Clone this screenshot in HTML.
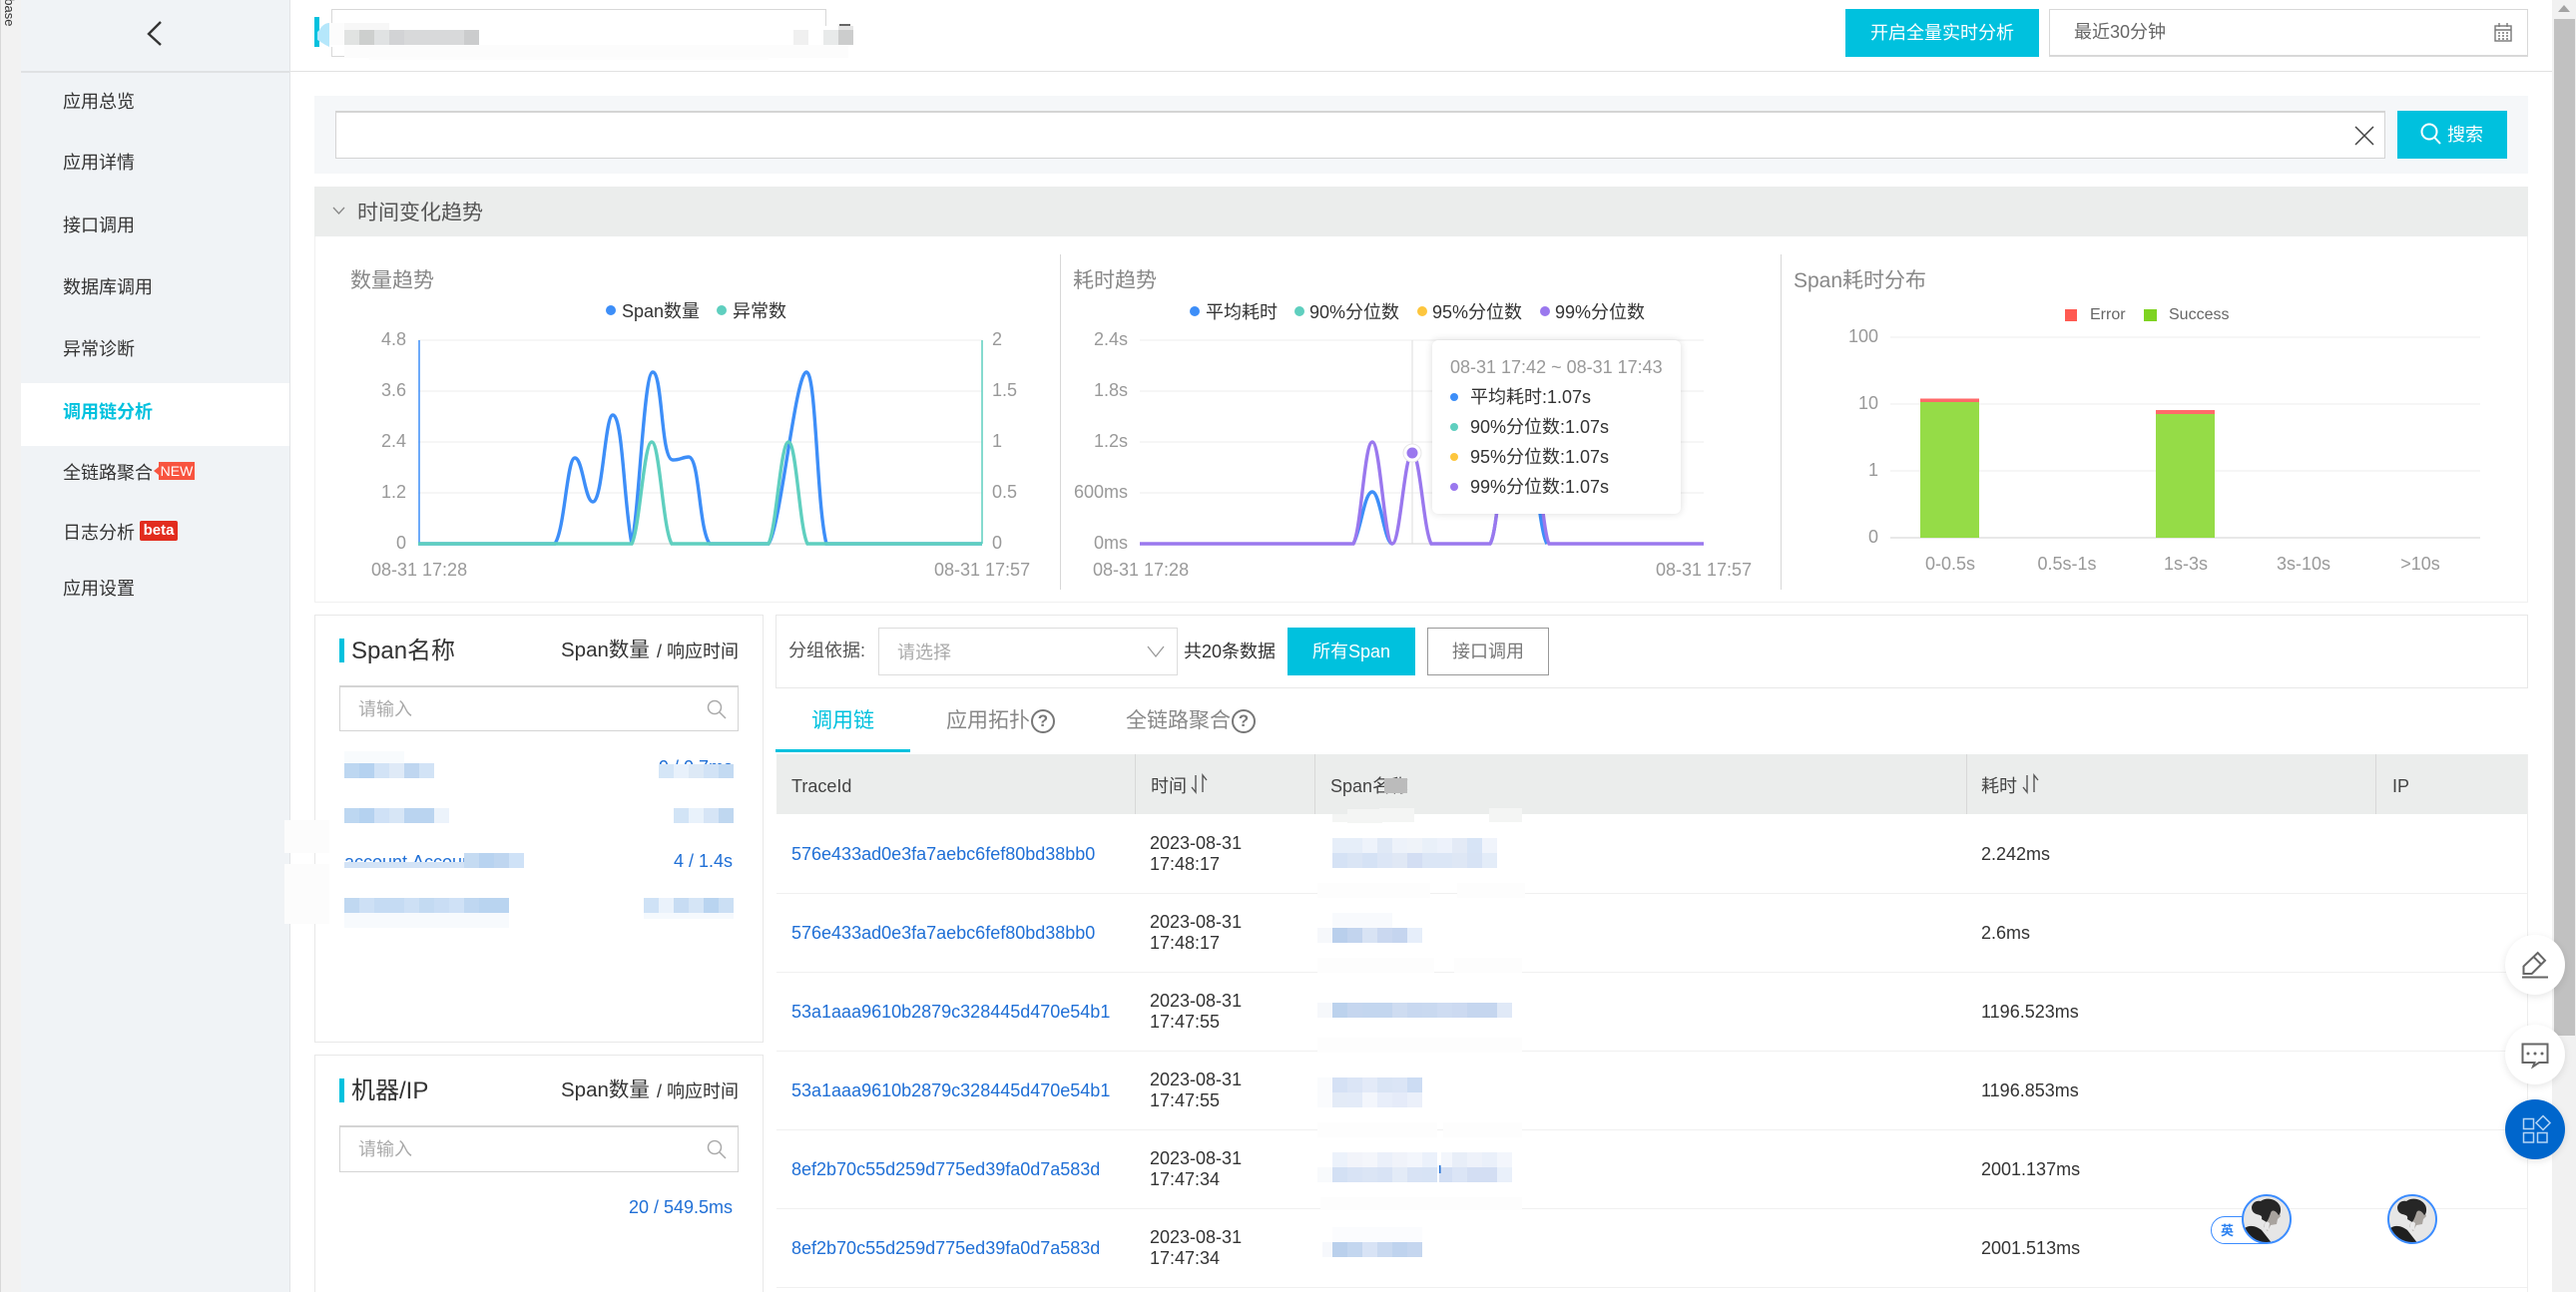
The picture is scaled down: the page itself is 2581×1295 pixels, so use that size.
<!DOCTYPE html>
<html lang="zh-CN"><head><meta charset="utf-8"><title>调用链分析</title>
<style>
html{margin:0;padding:0;background:#fff;width:2581px;height:1295px;overflow:hidden}
body{margin:0;padding:0;background:#fff;position:relative;width:2581px;height:1295px;overflow:hidden;font-family:"Liberation Sans","Noto Sans CJK SC",sans-serif;font-size:18px;color:#333}
.a{position:absolute;box-sizing:border-box}
.t{position:absolute;white-space:nowrap;line-height:24px;height:24px}
.g{color:#999}.d{color:#666}.b{color:#1f6fd6}.c{color:#00c1de}
.f21{font-size:21px}.f16{font-size:16px}
.r{text-align:right}.m{transform:translateX(-50%)}
.dot{position:absolute;width:10px;height:10px;border-radius:50%}
svg.l{position:absolute;left:0;top:0}
.btn{position:absolute;box-sizing:border-box;background:#00c1de;color:#fff;text-align:center;line-height:48px}
.bd{border:1px solid #e8e8e8}
.inp{border:1px solid #d4d4d4;border-top-width:2px;background:#fff}
.q{position:absolute;box-sizing:border-box;width:24px;height:24px;border:2px solid #777;border-radius:50%;color:#777;font-size:17px;font-weight:bold;line-height:20px;text-align:center}
</style></head><body>

<!-- left strip + sidebar -->
<div class="a" style="left:0;top:0;width:21px;height:1295px;background:#f2f2f2;border-left:1px solid #d8d8d8"></div>
<div class="a" style="left:2px;top:-27px;writing-mode:vertical-rl;font-size:13px;line-height:14px;white-space:nowrap;color:#333">database</div>
<div class="a" style="left:21px;top:0;width:270px;height:1295px;background:#f0f3f6;border-right:1px solid #e2e4e6"></div>
<div class="a" style="left:21px;top:71px;width:269px;height:2px;background:#dfe1e3"></div>
<div class="a" style="left:21px;top:384px;width:269px;height:63px;background:#fff"></div>
<span class="t" style="left:63px;top:90px">应用总览</span>
<span class="t" style="left:63px;top:151px">应用详情</span>
<span class="t" style="left:63px;top:214px">接口调用</span>
<span class="t" style="left:63px;top:276px">数据库调用</span>
<span class="t" style="left:63px;top:338px">异常诊断</span>
<span class="t c" style="left:63px;top:401px;font-weight:bold">调用链分析</span>
<span class="t" style="left:63px;top:462px">全链路聚合</span>
<div class="a" style="left:159px;top:463px;width:36px;height:18px;background:#f8543f;color:#fff;font-size:14px;line-height:18px;text-align:center">NEW</div>
<div class="a" style="left:154px;top:468px;width:0;height:0;border:4px solid transparent;border-right:5px solid #f8543f;border-left:0"></div>
<span class="t" style="left:63px;top:522px">日志分析</span>
<div class="a" style="left:140px;top:522px;width:38px;height:20px;background:#e22c1e;color:#fff;font-size:15px;line-height:20px;font-weight:bold;text-align:center;border-radius:2px">beta</div>
<span class="t" style="left:63px;top:578px">应用设置</span>

<!-- header -->
<div class="a" style="left:291px;top:71px;width:2266px;height:1px;background:#e2e2e2"></div>
<div class="a" style="left:332px;top:9px;width:496px;height:48px;border:1px solid #d8d8d8"></div>
<div class="btn" style="left:1849px;top:9px;width:194px;height:48px">开启全量实时分析</div>
<div class="a" style="left:2053px;top:9px;width:480px;height:48px;border:1px solid #d8d8d8;border-bottom-width:2px"></div>
<span class="t d" style="left:2078px;top:20px">最近30分钟</span>

<!-- search panel -->
<div class="a" style="left:315px;top:96px;width:2218px;height:78px;background:#f5f7f9"></div>
<div class="a inp" style="left:336px;top:111px;width:2054px;height:48px"></div>
<div class="btn" style="left:2402px;top:111px;width:110px;height:48px;padding-left:26px">搜索</div>

<!-- section -->
<div class="a bd" style="left:315px;top:236px;width:2218px;height:368px;border-color:#f0f0f0"></div>
<div class="a" style="left:315px;top:187px;width:2218px;height:50px;background:#ebedec"></div>
<span class="t f21" style="left:358px;top:202px;color:#555">时间变化趋势</span>
<div class="a" style="left:1062px;top:255px;width:1px;height:336px;background:#d8d8d8"></div>
<div class="a" style="left:1784px;top:255px;width:1px;height:336px;background:#d8d8d8"></div>

<!-- lower panels -->
<div class="a bd" style="left:315px;top:616px;width:450px;height:429px"></div>
<div class="a bd" style="left:315px;top:1057px;width:450px;height:238px;border-bottom:0"></div>
<div class="a" style="left:340px;top:640px;width:5px;height:24px;background:#00c1de"></div>
<div class="a" style="left:340px;top:1081px;width:5px;height:24px;background:#00c1de"></div>
<span class="t" style="left:352px;top:638px;font-size:24px;line-height:30px;height:30px">Span名称</span>
<span class="t" style="left:352px;top:1079px;font-size:24px;line-height:30px;height:30px">机器/IP</span>
<span class="t" style="left:562px;top:640px;font-size:20.5px">Span数量</span><span class="t" style="left:658px;top:641px">/ 响应时间</span>
<span class="t" style="left:562px;top:1081px;font-size:20.5px">Span数量</span><span class="t" style="left:658px;top:1082px">/ 响应时间</span>
<div class="a inp" style="left:340px;top:687px;width:400px;height:46px"></div>
<div class="a inp" style="left:340px;top:1128px;width:400px;height:47px"></div>
<span class="t" style="left:359px;top:699px;color:#aaa">请输入</span>
<span class="t" style="left:359px;top:1140px;color:#aaa">请输入</span>
<span class="t b" style="left:345px;top:852px">account.Accoun</span>
<span class="t b" style="left:660px;top:757px;width:74px;text-align:right">9 / 0.7ms</span>
<span class="t b" style="left:635px;top:851px;width:99px;text-align:right">4 / 1.4s</span>
<span class="t b" style="left:600px;top:1198px;width:134px;text-align:right">20 / 549.5ms</span>

<!-- right table -->
<div class="a bd" style="left:777px;top:616px;width:1756px;height:74px"></div>
<span class="t" style="left:790px;top:640px;color:#555">分组依据:</span>
<div class="a" style="left:880px;top:629px;width:300px;height:48px;border:1px solid #ddd"></div>
<span class="t" style="left:899px;top:642px;color:#aaa">请选择</span>
<span class="t" style="left:1186px;top:641px">共20条数据</span>
<div class="btn" style="left:1290px;top:629px;width:128px;height:48px">所有Span</div>
<div class="a" style="left:1430px;top:629px;width:122px;height:48px;border:1px solid #999;color:#777;line-height:46px;text-align:center">接口调用</div>
<span class="t f21 c" style="left:813px;top:711px">调用链</span>
<span class="t f21" style="left:948px;top:711px;color:#888">应用拓扑</span>
<span class="t f21" style="left:1128px;top:711px;color:#888">全链路聚合</span>
<div class="q" style="left:1033px;top:711px">?</div>
<div class="q" style="left:1234px;top:711px">?</div>
<div class="a" style="left:777px;top:751px;width:135px;height:3px;background:#00c1de"></div>
<div class="a" style="left:778px;top:756px;width:1755px;height:60px;background:#ebedec"></div>
<div class="a" style="left:1137px;top:756px;width:1px;height:60px;background:#d8d8d8"></div>
<div class="a" style="left:1317px;top:756px;width:1px;height:60px;background:#d8d8d8"></div>
<div class="a" style="left:1970px;top:756px;width:1px;height:60px;background:#d8d8d8"></div>
<div class="a" style="left:2380px;top:756px;width:1px;height:60px;background:#d8d8d8"></div>
<div class="a" style="left:2532px;top:756px;width:1px;height:539px;background:#eee"></div>
<span class="t" style="left:793px;top:776px;color:#444">TraceId</span>
<span class="t" style="left:1153px;top:776px;color:#444">时间</span>
<span class="t" style="left:1333px;top:776px;color:#444">Span名称</span>
<span class="t" style="left:1985px;top:776px;color:#444">耗时</span>
<span class="t" style="left:2397px;top:776px;color:#444">IP</span>
<div class="a" style="left:778px;top:895px;width:1754px;height:1px;background:#f0f0f0"></div>
<div class="a" style="left:778px;top:974px;width:1754px;height:1px;background:#f0f0f0"></div>
<div class="a" style="left:778px;top:1053px;width:1754px;height:1px;background:#f0f0f0"></div>
<div class="a" style="left:778px;top:1132px;width:1754px;height:1px;background:#f0f0f0"></div>
<div class="a" style="left:778px;top:1211px;width:1754px;height:1px;background:#f0f0f0"></div>
<div class="a" style="left:778px;top:1290px;width:1754px;height:1px;background:#f0f0f0"></div>

<span class="t b" style="left:793px;top:844px">576e433ad0e3fa7aebc6fef80bd38bb0</span>
<span class="t b" style="left:793px;top:923px">576e433ad0e3fa7aebc6fef80bd38bb0</span>
<span class="t b" style="left:793px;top:1002px">53a1aaa9610b2879c328445d470e54b1</span>
<span class="t b" style="left:793px;top:1081px">53a1aaa9610b2879c328445d470e54b1</span>
<span class="t b" style="left:793px;top:1160px">8ef2b70c55d259d775ed39fa0d7a583d</span>
<span class="t b" style="left:793px;top:1239px">8ef2b70c55d259d775ed39fa0d7a583d</span>
<span class="t" style="left:1152px;top:833px">2023-08-31</span><span class="t" style="left:1152px;top:854px">17:48:17</span>
<span class="t" style="left:1152px;top:912px">2023-08-31</span><span class="t" style="left:1152px;top:933px">17:48:17</span>
<span class="t" style="left:1152px;top:991px">2023-08-31</span><span class="t" style="left:1152px;top:1012px">17:47:55</span>
<span class="t" style="left:1152px;top:1070px">2023-08-31</span><span class="t" style="left:1152px;top:1091px">17:47:55</span>
<span class="t" style="left:1152px;top:1149px">2023-08-31</span><span class="t" style="left:1152px;top:1170px">17:47:34</span>
<span class="t" style="left:1152px;top:1228px">2023-08-31</span><span class="t" style="left:1152px;top:1249px">17:47:34</span>
<span class="t" style="left:1985px;top:844px">2.242ms</span>
<span class="t" style="left:1985px;top:923px">2.6ms</span>
<span class="t" style="left:1985px;top:1002px">1196.523ms</span>
<span class="t" style="left:1985px;top:1081px">1196.853ms</span>
<span class="t" style="left:1985px;top:1160px">2001.137ms</span>
<span class="t" style="left:1985px;top:1239px">2001.513ms</span>

<!-- chart graphics -->
<svg class="l" width="2581" height="1295" viewBox="0 0 2581 1295" fill="none">
 <g stroke="#f6f6f6" stroke-width="2">
  <path d="M419 341H984M419 392H984M419 443H984M419 494H984"/>
  <path d="M1142 341H1707M1142 392H1707M1142 443H1707M1142 494H1707"/>
  <path d="M1894 338H2485M1894 405H2485M1894 472H2485"/>
 </g>
 <path d="M419 545H984M1142 545H1707M1894 539H2485" stroke="#e8e8e8" stroke-width="2"/>
 <path d="M420 341V545" stroke="#3d8ef8" stroke-width="1.5"/>
 <path d="M984 341V545" stroke="#5fcfbf" stroke-width="1.5"/>
 <path d="M419 545H556C566 530 568 459 576 459C584 459 586 503 594 503C604 503 606 416 614 416C624 416 625 505 633 545C641 505 645 373 654 373C664 373 662 461 674 461C682 461 684 458 690 458C701 458 700 530 711 545H770C782 530 797 373 808 373C818 373 818 505 828 545H984" stroke="#3d8ef8" stroke-width="3.4"/>
 <path d="M419 545H633C641 530 645 443 653 443C661 443 664 530 673 545H770C778 530 782 443 790 443C798 443 801 530 809 545H984" stroke="#5fcfbf" stroke-width="3.4"/>
 <path d="M1415 341V545" stroke="#ddd" stroke-width="1"/>
 <path d="M1356 545C1364 530 1367 493 1375 493C1383 493 1387 545 1395 545" stroke="#3d8ef8" stroke-width="3.4"/>
 <path d="M1493 545C1503 530 1505 400 1520 400C1535 400 1540 530 1550 545" stroke="#3d8ef8" stroke-width="3.4"/>
 <path d="M1142 545H1356C1364 530 1367 443 1375 443C1383 443 1387 545 1395 545C1403 545 1407 454 1415 454C1423 454 1426 530 1434 545H1493C1503 530 1505 400 1522 400C1539 400 1544 530 1552 545H1707" stroke="#9a78ee" stroke-width="3.4"/>
 <circle cx="1415" cy="454" r="9" fill="#fff" stroke="#e6e6e6" stroke-width="1"/>
 <circle cx="1415" cy="454" r="5.5" fill="#9a78ee"/>
 <rect x="1924" y="403" width="59" height="136" fill="#95dc47"/>
 <rect x="1924" y="399.5" width="59" height="3.5" fill="#ff6a6a"/>
 <rect x="2160" y="415" width="59" height="124" fill="#95dc47"/>
 <rect x="2160" y="411" width="59" height="4" fill="#ff6a6a"/>
 <rect x="2069" y="310" width="12" height="12" fill="#ff5a52"/>
 <rect x="2148" y="310" width="13" height="12" fill="#7ed321"/>
 <path d="M161 22L149 34L161 45" stroke="#333" stroke-width="2.4"/>
 <path d="M334 208L339.5 214L345 208" stroke="#888" stroke-width="1.3"/>
 <path d="M2360 127L2378 145M2378 127L2360 145" stroke="#444" stroke-width="1.5"/>
 <g stroke="#fff" stroke-width="2"><circle cx="2434" cy="132" r="7.5"/><path d="M2439.5 138L2445 144"/></g>
 <g stroke="#aaa" stroke-width="1.5"><circle cx="716" cy="709" r="6.5"/><path d="M721 714L727 720"/><circle cx="716" cy="1150" r="6.5"/><path d="M721 1155L727 1161"/></g>
 <path d="M1150 648L1158 658L1166 648" stroke="#999" stroke-width="1.3"/>
 <g stroke="#777" stroke-width="1.4"><rect x="2500" y="26" width="16" height="15"/><path d="M2500 30H2516M2504 23V27M2512 23V27"/><path d="M2503 33H2513M2503 36H2513M2503 39H2513" stroke-dasharray="2 2"/></g>
 <g stroke="#555" stroke-width="1.4"><path d="M1198 777V794L1194 789M1205 794V777L1209 782"/><path d="M2031 777V794L2027 789M2038 794V777L2042 782"/></g>
</svg>

<!-- chart text -->
<span class="t f21" style="left:351px;top:270px;color:#888">数量趋势</span>
<div class="dot" style="left:607px;top:306px;background:#3d8ef8"></div><span class="t" style="left:623px;top:300px">Span数量</span>
<div class="dot" style="left:718px;top:306px;background:#5fcfbf"></div><span class="t" style="left:734px;top:300px">异常数</span>
<span class="t g r" style="left:347px;top:328px;width:60px">4.8</span>
<span class="t g r" style="left:347px;top:379px;width:60px">3.6</span>
<span class="t g r" style="left:347px;top:430px;width:60px">2.4</span>
<span class="t g r" style="left:347px;top:481px;width:60px">1.2</span>
<span class="t g r" style="left:347px;top:532px;width:60px">0</span>
<span class="t g" style="left:994px;top:328px">2</span>
<span class="t g" style="left:994px;top:379px">1.5</span>
<span class="t g" style="left:994px;top:430px">1</span>
<span class="t g" style="left:994px;top:481px">0.5</span>
<span class="t g" style="left:994px;top:532px">0</span>
<span class="t g" style="left:372px;top:559px">08-31 17:28</span>
<span class="t g" style="left:936px;top:559px">08-31 17:57</span>

<span class="t f21" style="left:1075px;top:270px;color:#888">耗时趋势</span>
<div class="dot" style="left:1192px;top:307px;background:#3d8ef8"></div><span class="t" style="left:1208px;top:301px">平均耗时</span>
<div class="dot" style="left:1297px;top:307px;background:#5fcfbf"></div><span class="t" style="left:1312px;top:301px">90%分位数</span>
<div class="dot" style="left:1420px;top:307px;background:#fdc63e"></div><span class="t" style="left:1435px;top:301px">95%分位数</span>
<div class="dot" style="left:1543px;top:307px;background:#9a78ee"></div><span class="t" style="left:1558px;top:301px">99%分位数</span>
<span class="t g r" style="left:1060px;top:328px;width:70px">2.4s</span>
<span class="t g r" style="left:1060px;top:379px;width:70px">1.8s</span>
<span class="t g r" style="left:1060px;top:430px;width:70px">1.2s</span>
<span class="t g r" style="left:1060px;top:481px;width:70px">600ms</span>
<span class="t g r" style="left:1060px;top:532px;width:70px">0ms</span>
<span class="t g" style="left:1095px;top:559px">08-31 17:28</span>
<span class="t g" style="left:1659px;top:559px">08-31 17:57</span>

<!-- tooltip -->
<div class="a" style="left:1435px;top:341px;width:249px;height:174px;background:#fff;border-radius:6px;box-shadow:0 0 8px rgba(0,0,0,.14)"></div>
<span class="t g" style="left:1453px;top:356px">08-31 17:42 ~ 08-31 17:43</span>
<div class="dot" style="left:1453px;top:394px;width:8px;height:8px;background:#3d8ef8"></div><span class="t" style="left:1473px;top:386px">平均耗时:1.07s</span>
<div class="dot" style="left:1453px;top:424px;width:8px;height:8px;background:#5fcfbf"></div><span class="t" style="left:1473px;top:416px">90%分位数:1.07s</span>
<div class="dot" style="left:1453px;top:454px;width:8px;height:8px;background:#fdc63e"></div><span class="t" style="left:1473px;top:446px">95%分位数:1.07s</span>
<div class="dot" style="left:1453px;top:484px;width:8px;height:8px;background:#9a78ee"></div><span class="t" style="left:1473px;top:476px">99%分位数:1.07s</span>

<span class="t f21" style="left:1797px;top:270px;color:#888">Span耗时分布</span>
<span class="t f16" style="left:2094px;top:304px;color:#666">Error</span>
<span class="t f16" style="left:2173px;top:304px;color:#666">Success</span>
<span class="t g r" style="left:1822px;top:325px;width:60px">100</span>
<span class="t g r" style="left:1822px;top:392px;width:60px">10</span>
<span class="t g r" style="left:1822px;top:459px;width:60px">1</span>
<span class="t g r" style="left:1822px;top:526px;width:60px">0</span>
<span class="t g m" style="left:1954px;top:553px">0-0.5s</span>
<span class="t g m" style="left:2071px;top:553px">0.5s-1s</span>
<span class="t g m" style="left:2190px;top:553px">1s-3s</span>
<span class="t g m" style="left:2308px;top:553px">3s-10s</span>
<span class="t g m" style="left:2425px;top:553px">&gt;10s</span>

<!-- mosaics / masks -->
<svg class="l" width="2581" height="1295" viewBox="0 0 2581 1295">
 <!-- header masks -->
 <rect x="330" y="23" width="40" height="24" fill="#fff"/>
 <rect x="370" y="26" width="485" height="20" fill="#fff"/>
 <rect x="330" y="45" width="40" height="2" fill="#fff"/>
 <rect x="336" y="23" width="54" height="7" fill="#f7f7f7"/>
 <rect x="345" y="45" width="505" height="13" fill="#fcfcfc"/>
 <rect x="370" y="57" width="400" height="3" fill="#fdfdfd"/>
 <rect x="315" y="17" width="5" height="30" fill="#00c1de"/>
 <path d="M320 30C322 26 326 23 330 23V47L326 45L318 40V32Z" fill="#b5e7fb"/>
 <rect x="330" y="23" width="15" height="22" fill="#fcfcfc"/>
 <rect x="345" y="30" width="15" height="15" fill="#e1e3e2"/>
 <rect x="360" y="30" width="15" height="15" fill="#cdcfce"/>
 <rect x="375" y="30" width="15" height="15" fill="#e0e2e3"/>
 <rect x="390" y="30" width="15" height="15" fill="#d2d3d5"/>
 <rect x="405" y="30" width="60" height="15" fill="#d8d9da"/>
 <rect x="465" y="30" width="15" height="15" fill="#cbcccd"/>
 <rect x="795" y="30" width="15" height="15" fill="#f0f0f0"/>
 <rect x="825" y="30" width="15" height="15" fill="#e8eaea"/>
 <rect x="840" y="30" width="15" height="15" fill="#cccdcd"/>
 <rect x="840" y="26" width="15" height="4" fill="#e5e5e5"/>
 <path d="M841 25h11" stroke="#666" stroke-width="2"/>
 <!-- whitish blur areas -->
 <rect x="285" y="822" width="45" height="33" fill="#fcfcfc"/>
 <rect x="285" y="866" width="45" height="60" fill="#fcfcfc"/>
 <g fill="#fdfdfd">
  <rect x="1320" y="885" width="113" height="15"/><rect x="1460" y="885" width="68" height="15"/>
  <rect x="1320" y="960" width="117" height="15"/><rect x="1457" y="960" width="68" height="15"/>
  <rect x="1320" y="1040" width="205" height="15"/>
  <rect x="1320" y="1125" width="120" height="15"/><rect x="1446" y="1125" width="79" height="15"/>
  <rect x="1323" y="1200" width="202" height="13"/>
 </g>
 <g fill="#f4f5f4"><rect x="1350" y="811" width="35" height="14"/><rect x="1335" y="816" width="50" height="8"/><rect x="1382" y="810" width="35" height="14"/><rect x="1492" y="810" width="33" height="14"/></g>
 <rect x="1387" y="780" width="23" height="15" fill="#bbb"/>
 <!-- span list -->
 <rect x="345" y="753" width="60" height="12" fill="#f8fbfd"/>
 <rect x="345" y="765" width="15" height="15" fill="#bdd7f1"/><rect x="360" y="765" width="15" height="15" fill="#b5d2f0"/><rect x="375" y="765" width="15" height="15" fill="#d2e3f6"/><rect x="390" y="765" width="15" height="15" fill="#dfeaf7"/><rect x="405" y="765" width="15" height="15" fill="#bfd6f0"/><rect x="420" y="765" width="15" height="15" fill="#d2e3f6"/>
 <rect x="660" y="766" width="15" height="14" fill="#d5e6f7"/><rect x="675" y="766" width="15" height="14" fill="#e8f1fb"/><rect x="690" y="766" width="15" height="14" fill="#dde9f6"/><rect x="705" y="766" width="15" height="14" fill="#d2e3f6"/><rect x="720" y="766" width="15" height="14" fill="#c3daf2"/>
 <rect x="345" y="810" width="15" height="15" fill="#bdd7f1"/><rect x="360" y="810" width="15" height="15" fill="#b5d2f0"/><rect x="375" y="810" width="15" height="15" fill="#cfe1f6"/><rect x="390" y="810" width="15" height="15" fill="#d7e6f6"/><rect x="405" y="810" width="30" height="15" fill="#bad4f0"/><rect x="435" y="810" width="15" height="15" fill="#ecf3fb"/>
 <rect x="675" y="810" width="15" height="15" fill="#d2e4f6"/><rect x="690" y="810" width="15" height="15" fill="#e9f2fb"/><rect x="705" y="810" width="15" height="15" fill="#d6e5f6"/><rect x="720" y="810" width="15" height="15" fill="#bfd7f0"/>
 <rect x="345" y="864" width="120" height="6" fill="#d3e3f6"/><rect x="465" y="855" width="15" height="15" fill="#c5dbf2"/><rect x="480" y="855" width="15" height="15" fill="#b8d3f0"/><rect x="495" y="855" width="15" height="15" fill="#bfd6f0"/><rect x="510" y="855" width="15" height="15" fill="#cfe2f7"/>
 <rect x="345" y="900" width="15" height="15" fill="#c0d8f1"/><rect x="360" y="900" width="15" height="15" fill="#cde0f5"/><rect x="375" y="900" width="30" height="15" fill="#c5dbf3"/><rect x="405" y="900" width="15" height="15" fill="#cde0f5"/><rect x="420" y="900" width="15" height="15" fill="#c3daf2"/><rect x="435" y="900" width="15" height="15" fill="#c9ddf4"/><rect x="450" y="900" width="15" height="15" fill="#cfe1f6"/><rect x="465" y="900" width="15" height="15" fill="#bfd7f1"/><rect x="480" y="900" width="30" height="15" fill="#b9d4f0"/>
 <rect x="345" y="915" width="165" height="15" fill="#f7fafd"/>
 <rect x="645" y="900" width="15" height="15" fill="#cfe2f6"/><rect x="660" y="900" width="15" height="15" fill="#eaf2fb"/><rect x="675" y="900" width="15" height="15" fill="#c7dcf3"/><rect x="690" y="900" width="15" height="15" fill="#d5e5f6"/><rect x="705" y="900" width="15" height="15" fill="#b9d4f0"/><rect x="720" y="900" width="15" height="15" fill="#cbdff4"/>
 <rect x="645" y="915" width="90" height="6" fill="#f5f9fd"/>
 <!-- table row 1 -->
 <rect x="1335" y="840" width="30" height="15" fill="#e6eef9"/><rect x="1365" y="840" width="15" height="15" fill="#eef3fb"/><rect x="1380" y="840" width="15" height="15" fill="#e0e9f6"/><rect x="1395" y="840" width="15" height="15" fill="#edf2fa"/><rect x="1410" y="840" width="15" height="15" fill="#eff3f9"/><rect x="1425" y="840" width="15" height="15" fill="#e9f0f9"/><rect x="1440" y="840" width="15" height="15" fill="#edf2fb"/><rect x="1455" y="840" width="15" height="15" fill="#e3eaf6"/><rect x="1470" y="840" width="15" height="15" fill="#d7e4f6"/><rect x="1485" y="840" width="15" height="15" fill="#f0f4fb"/>
 <rect x="1335" y="855" width="15" height="15" fill="#d5e2f5"/><rect x="1350" y="855" width="15" height="15" fill="#dae5f5"/><rect x="1365" y="855" width="15" height="15" fill="#d5e2f5"/><rect x="1380" y="855" width="15" height="15" fill="#dce6f6"/><rect x="1395" y="855" width="15" height="15" fill="#e0e8f5"/><rect x="1410" y="855" width="15" height="15" fill="#d3def3"/><rect x="1425" y="855" width="30" height="15" fill="#dbe6f6"/><rect x="1455" y="855" width="15" height="15" fill="#dee7f5"/><rect x="1470" y="855" width="15" height="15" fill="#d7e3f5"/><rect x="1485" y="855" width="15" height="15" fill="#e3ecf8"/>
 <!-- row 2 -->
 <rect x="1335" y="915" width="60" height="15" fill="#f8fafd"/>
 <rect x="1320" y="930" width="15" height="15" fill="#f6f8fb"/><rect x="1335" y="930" width="15" height="15" fill="#b9cfec"/><rect x="1350" y="930" width="15" height="15" fill="#c2d4ee"/><rect x="1365" y="930" width="15" height="15" fill="#d8e3f4"/><rect x="1380" y="930" width="15" height="15" fill="#cad8f0"/><rect x="1395" y="930" width="15" height="15" fill="#c5d5ef"/><rect x="1410" y="930" width="15" height="15" fill="#e6eefa"/>
 <!-- row 3 -->
 <rect x="1320" y="1005" width="15" height="15" fill="#f6f8fb"/><rect x="1335" y="1005" width="15" height="15" fill="#bcd2ed"/><rect x="1350" y="1005" width="15" height="15" fill="#c5d6ef"/><rect x="1365" y="1005" width="30" height="15" fill="#c3d6ef"/><rect x="1395" y="1005" width="15" height="15" fill="#cedcf1"/><rect x="1410" y="1005" width="15" height="15" fill="#c8d8f0"/><rect x="1425" y="1005" width="15" height="15" fill="#c9d9f0"/><rect x="1440" y="1005" width="15" height="15" fill="#cedcf2"/><rect x="1455" y="1005" width="15" height="15" fill="#ccdaf1"/><rect x="1470" y="1005" width="30" height="15" fill="#c5d6ef"/><rect x="1500" y="1005" width="15" height="15" fill="#e0e9f7"/>
 <!-- row 4 -->
 <rect x="1320" y="1080" width="15" height="30" fill="#fafbfd"/>
 <rect x="1335" y="1080" width="15" height="15" fill="#d5e1f5"/><rect x="1350" y="1080" width="15" height="15" fill="#dbe5f6"/><rect x="1365" y="1080" width="15" height="15" fill="#e3eaf8"/><rect x="1380" y="1080" width="15" height="15" fill="#d9e4f5"/><rect x="1395" y="1080" width="15" height="15" fill="#dbe5f6"/><rect x="1410" y="1080" width="15" height="15" fill="#ccdcf3"/>
 <rect x="1335" y="1095" width="15" height="15" fill="#e3ebf7"/><rect x="1350" y="1095" width="15" height="15" fill="#e3ebf8"/><rect x="1365" y="1095" width="15" height="15" fill="#f3f6fc"/><rect x="1380" y="1095" width="15" height="15" fill="#e8eefa"/><rect x="1395" y="1095" width="15" height="15" fill="#e5ebf9"/><rect x="1410" y="1095" width="15" height="15" fill="#ebf0fa"/>
 <!-- row 5 -->
 <rect x="1335" y="1155" width="15" height="15" fill="#ecf2fb"/><rect x="1350" y="1155" width="15" height="15" fill="#f2f4fa"/><rect x="1365" y="1155" width="15" height="15" fill="#f4f6fb"/><rect x="1380" y="1155" width="15" height="15" fill="#ebf0fa"/><rect x="1395" y="1155" width="15" height="15" fill="#f0f3fa"/><rect x="1410" y="1155" width="15" height="15" fill="#f3f6fc"/><rect x="1425" y="1155" width="15" height="15" fill="#ebf1fb"/><rect x="1444" y="1155" width="11" height="15" fill="#f3f6fc"/><rect x="1455" y="1155" width="15" height="15" fill="#e8eef8"/><rect x="1470" y="1155" width="15" height="15" fill="#eef2fa"/><rect x="1485" y="1155" width="15" height="15" fill="#eaf0fa"/><rect x="1500" y="1155" width="15" height="15" fill="#f3f6fc"/>
 <rect x="1320" y="1170" width="15" height="15" fill="#f8fafc"/>
 <rect x="1335" y="1170" width="15" height="15" fill="#d3e0f4"/><rect x="1350" y="1170" width="15" height="15" fill="#d8e3f5"/><rect x="1365" y="1170" width="15" height="15" fill="#dbe5f5"/><rect x="1380" y="1170" width="15" height="15" fill="#d8e3f5"/><rect x="1395" y="1170" width="15" height="15" fill="#e3ebf7"/><rect x="1410" y="1170" width="15" height="15" fill="#d8e3f5"/><rect x="1425" y="1170" width="15" height="15" fill="#d7e3f5"/><rect x="1442" y="1170" width="13" height="15" fill="#d3dff4"/><rect x="1455" y="1170" width="15" height="15" fill="#dbe5f6"/><rect x="1470" y="1170" width="30" height="15" fill="#d3def3"/><rect x="1500" y="1170" width="15" height="15" fill="#e9f0fa"/>
 <rect x="1442" y="1168" width="1.5" height="8" fill="#1f6fd6"/>
 <!-- row 6 -->
 <rect x="1335" y="1230" width="90" height="15" fill="#fbfcfe"/>
 <rect x="1325" y="1245" width="10" height="15" fill="#f6f8fc"/><rect x="1335" y="1245" width="15" height="15" fill="#bad0ec"/><rect x="1350" y="1245" width="15" height="15" fill="#c3d6ef"/><rect x="1365" y="1245" width="15" height="15" fill="#d8e3f5"/><rect x="1380" y="1245" width="15" height="15" fill="#c9d9f0"/><rect x="1395" y="1245" width="15" height="15" fill="#bfd3ee"/><rect x="1410" y="1245" width="15" height="15" fill="#c5d6ef"/>
</svg>

<!-- scrollbar -->
<div class="a" style="left:2557px;top:0;width:24px;height:1295px;background:#f1f1f1"></div>
<div class="a" style="left:2559px;top:19px;width:21px;height:1019px;background:#c1c1c1"></div>
<div class="a" style="left:2563px;top:5px;width:0;height:0;border:6px solid transparent;border-bottom:7px solid #a3a3a3;border-top:0"></div>

<!-- floating -->
<div class="a" style="left:2510px;top:937px;width:60px;height:60px;border-radius:50%;background:#fff;box-shadow:0 2px 8px rgba(0,0,0,.1)"></div>
<div class="a" style="left:2510px;top:1027px;width:60px;height:60px;border-radius:50%;background:#fff;box-shadow:0 2px 8px rgba(0,0,0,.1)"></div>
<div class="a" style="left:2510px;top:1102px;width:60px;height:60px;border-radius:50%;background:#0066cc;box-shadow:0 2px 8px rgba(0,0,0,.1)"></div>
<div class="a" style="left:2215px;top:1219px;width:56px;height:28px;border:1.5px solid #3b8cff;border-radius:14px 0 0 14px;background:#fff"></div>
<span class="a" style="left:2225px;top:1226px;font-size:13px;line-height:16px;font-weight:bold;color:#2a80f0">英</span>
<svg class="l" width="2581" height="1295" viewBox="0 0 2581 1295" fill="none">
 <defs><clipPath id="av"><circle cx="25" cy="25" r="23.5"/></clipPath>
 <g id="avatar"><circle cx="25" cy="25" r="24" fill="#e6e6e6"/>
  <g clip-path="url(#av)">
   <path d="M29 15L37 17L39 22L36 25L35 30L29 31L26 37L22 33L24 26Z" fill="#a8a39e"/>
   <path d="M24 26L28 29L27 36L22 35Z" fill="#e8e8e8"/>
   <path d="M10 13C11 8 15 6 19 7C24 3 34 4 38 11C40 15 39 20 37 21C34 16 30 15 29 19C28 22 27 25 25 28L20 25C21 21 18 21 15 20C12 19 10 17 10 13Z" fill="#262626"/>
   <path d="M3 34C8 30 15 32 20 36L31 50H6Z" fill="#1f1f1f"/>
  </g><circle cx="25" cy="25" r="24" stroke="#3b8cff" stroke-width="2"/></g></defs>
 <!-- pencil -->
 <path d="M2527 979.5H2553" stroke="#666" stroke-width="2"/>
 <path d="M2528.5 976V968.5L2542.7 955L2550 962.7L2536.7 976Z" stroke="#666" stroke-width="2" stroke-linejoin="miter"/>
 <path d="M2539 959.5L2546 966.5" stroke="#666" stroke-width="2"/>
 <!-- chat -->
 <path d="M2527.5 1046.5H2552.5V1065H2544L2538 1069L2539.5 1065H2527.5Z" stroke="#666" stroke-width="2"/>
 <g fill="#666"><circle cx="2533" cy="1056" r="1.5"/><circle cx="2540" cy="1056" r="1.5"/><circle cx="2547" cy="1056" r="1.5"/></g>
 <!-- apps -->
 <g stroke="#b5d5f5" stroke-width="1.5"><rect x="2528.5" y="1121.5" width="10" height="10"/><rect x="2528.5" y="1135.5" width="10" height="9.5"/><rect x="2542.5" y="1135.5" width="9.5" height="9.5"/><path d="M2548 1118.5L2555 1125.5L2548 1132.5L2541 1125.5Z"/></g>
 <use href="#avatar" x="2246" y="1197"/>
 <use href="#avatar" x="2392" y="1197"/>
</svg>
</body></html>
